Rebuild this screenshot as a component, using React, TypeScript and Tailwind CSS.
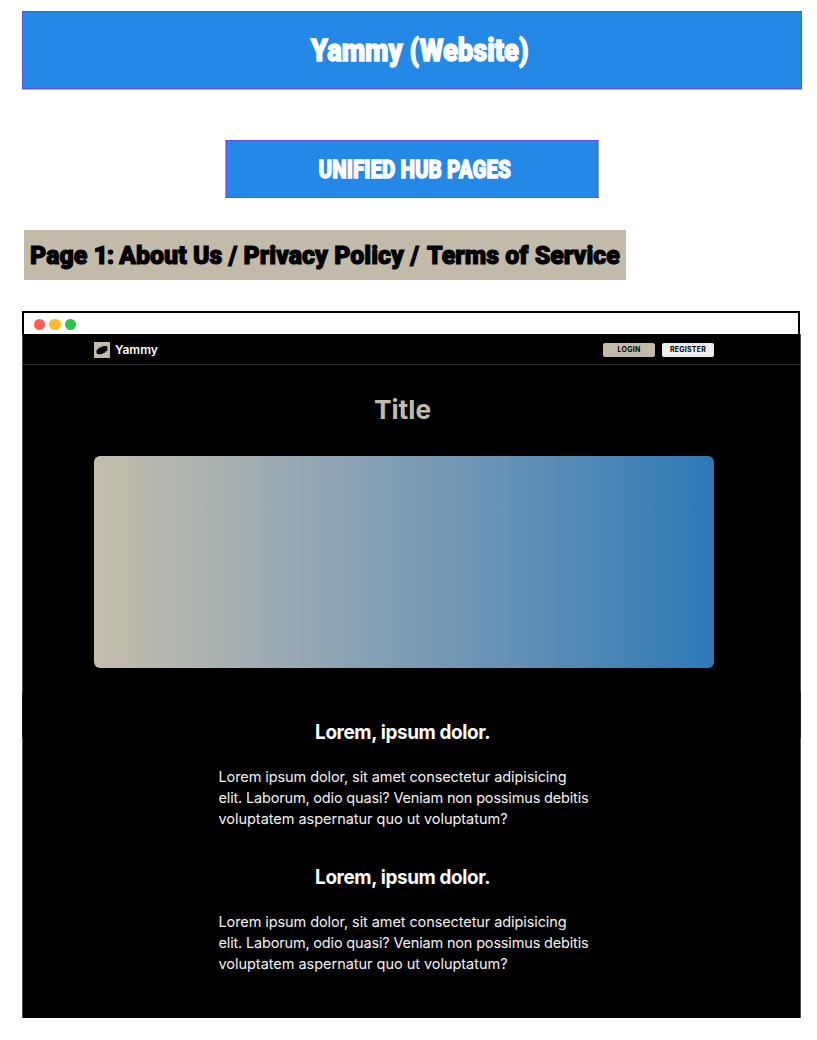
import React from "react";

const paragraph = [
  { text: "Lorem ipsum dolor, sit amet consectetur adipisicing", tracking: "tracking-[-0.09px]" },
  { text: "elit. Laborum, odio quasi? Veniam non possimus debitis", tracking: "tracking-[-0.17px]" },
  { text: "voluptatem aspernatur quo ut voluptatum?", tracking: "tracking-[-0.03px]" },
];

function Logo() {
  return (
    <svg className="h-4 w-4 bg-[#c3bba9]" viewBox="0 0 16 16">
      <path
        d="M2.4 9.2 3.2 7.2 4.6 6.7 5 5.6 7 5.4 8 4.4 10.5 4 12.6 3.9 13.5 5 13.2 7.3 13.9 8.2 11.8 9.2 10.8 10.8 9 11.2 8 12.1 5.2 12.3 3.3 12 2.6 11Z"
        fill="#000"
      />
    </svg>
  );
}

function Section() {
  return (
    <section className="flex w-[370px] flex-col">
      <h2 className="mr-px h-[30px] scale-x-[.945] self-center text-[20px] leading-[31px] font-bold whitespace-nowrap tracking-[-0.4px]">
        Lorem, ipsum dolor.
      </h2>
      <p className="mt-[19px] text-[14.5px] leading-[21px] whitespace-nowrap text-[#f2f2f2]">
        {paragraph.map(({ text, tracking }) => (
          <span key={text} className={`block ${tracking}`}>{text}</span>
        ))}
      </p>
    </section>
  );
}

export default function App() {
  return (
    <div className="flex h-[1040px] w-[817px] flex-col overflow-hidden bg-white font-['Inter',sans-serif] text-white">
      <header className="mt-[11px] ml-[22px] flex h-[78px] w-[780px] shrink-0 items-center justify-center border border-[#5b50e8] bg-[#2388e6] shadow-[0_1px_0_#b3b0f5]">
        <h1 className="mt-[3px] ml-[15px] scale-x-[.88] font-['Roboto',sans-serif] text-[31px] font-black whitespace-nowrap [-webkit-text-stroke:1.3px_white]">Yammy (Website)</h1>
      </header>
      <div className="mt-[51px] ml-[225px] flex h-[58px] w-[374px] shrink-0 items-center justify-center border border-x-[#a19cf4] border-y-[#5b50e8] bg-[#2388e6] shadow-[inset_1px_0_0_#5b50e8,inset_-1px_0_0_#5b50e8]">
        <h2 className="ml-[5px] scale-x-[.778] font-['Roboto',sans-serif] text-[26.5px] font-black whitespace-nowrap [-webkit-text-stroke:1.3px_white]">UNIFIED HUB PAGES</h2>
      </div>
      <div className="mt-8 ml-6 flex h-[50px] w-[602px] shrink-0 items-center bg-[#c3bba9] pl-[5.5px] text-black">
        <h2 className="mb-px origin-left scale-x-[.942] font-['Roboto',sans-serif] text-[26.5px] font-black whitespace-nowrap [-webkit-text-stroke:1.1px_black]">
          Page <span className="tracking-[-1.5px]">1:</span> About Us /{" "}
          <span>Privacy Policy</span> / <span className="ml-0.5">Terms of Service</span>
        </h2>
      </div>

      <main className="mt-[31px] ml-[22px] flex h-[707px] w-[779px] shrink-0 flex-col">
        <div className="flex h-[23px] w-[778px] shrink-0 items-end gap-1 border-x-2 border-t-2 border-black bg-white pb-[4px] pl-[9.5px]">
          <i className="h-[11.5px] w-[11.5px] rounded-full bg-[#ff5f57]" />
          <i className="h-[11.5px] w-[11.5px] rounded-full bg-[#febc2e]" />
          <i className="h-[11.5px] w-[11.5px] rounded-full bg-[#28c840]" />
        </div>
        <div className="flex flex-1 flex-col items-center border-x bg-black [border-image:linear-gradient(#505050_358px,#1c1c1c_358px,#1c1c1c_404px,#505050_404px)_1]">
          <nav className="flex h-[31px] w-full shrink-0 items-center border-b border-[#35332f] pt-px pr-[86px] pl-[71px]">
            <Logo />
            <span className="ml-[5px] pt-px text-[12px] font-semibold">Yammy</span>
            <div className="ml-auto flex gap-[7px] text-[7px] leading-[14px] font-bold tracking-[0.25px] text-black">
              <button className="h-3.5 w-[52px] rounded-[2px] bg-[#c3bba9]">LOGIN</button>
              <button className="h-3.5 w-[52px] rounded-[2px] bg-[#ececec]">REGISTER</button>
            </div>
          </nav>
          <h1 className="mt-[25px] mr-[18px] h-10 text-[26.3px] leading-10 font-bold text-[#c3bba9]">Title</h1>
          <div className="mt-[26px] mr-[15px] h-[212px] w-[620px] shrink-0 rounded-md bg-linear-to-r from-[#c5bead] to-[#2a79b6]" />
          <div className="mt-[49px] mr-4 flex flex-col gap-[33px]">
            <Section />
            <Section />
          </div>
        </div>
      </main>
    </div>
  );
}
